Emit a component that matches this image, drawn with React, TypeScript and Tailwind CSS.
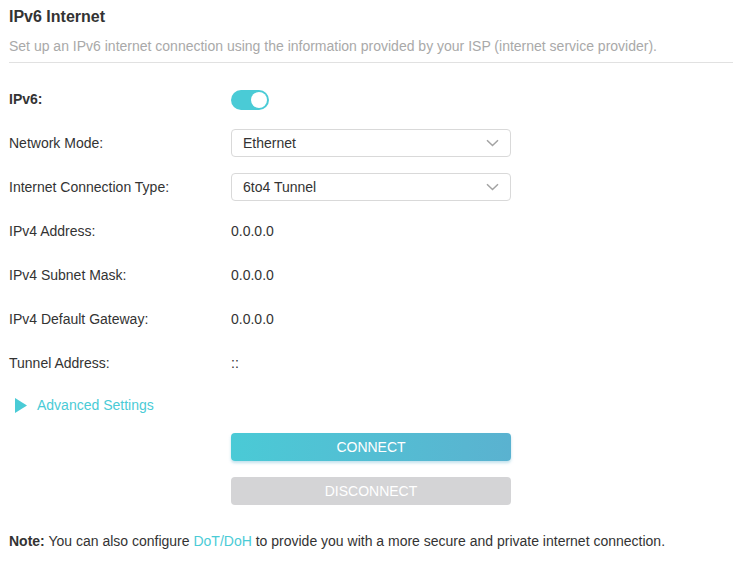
import React from "react";

function Chevron() {
  return (
    <svg width="13" height="8" viewBox="0 0 13 8" className="absolute right-[11px] top-1/2 -translate-y-1/2">
      <path d="M1 1.2 L6.5 6.5 L12 1.2" fill="none" stroke="#a3a3a3" strokeWidth="1.5" />
    </svg>
  );
}

function SelectBox({ value }: { value: string }) {
  return (
    <div className="relative flex h-[28px] w-[280px] items-center rounded-[4px] border border-[#d9d9d9] bg-white pl-[11px] text-[14px] text-[#333]">
      {value}
      <Chevron />
    </div>
  );
}

function Row({ label, children, bold }: { label: string; children: React.ReactNode; bold?: boolean }) {
  return (
    <div className="flex h-[44px] items-center">
      <div className={`w-[222px] text-[14px] text-[#333] ${bold ? "font-bold" : ""}`}>{label}</div>
      <div className="flex items-center text-[14px] text-[#333]">{children}</div>
    </div>
  );
}

export default function App() {
  return (
    <div className="min-h-[561px] w-[742px] bg-white px-[9px]" style={{ fontFamily: '"Liberation Sans", Arial, sans-serif' }}>
      <div className="flex h-[34px] items-center text-[16px] font-bold text-[#333]">IPv6 Internet</div>
      <div className="flex h-[24px] items-center text-[14px] text-[#a9a9a9]">
        Set up an IPv6 internet connection using the information provided by your ISP (internet service provider).
      </div>
      <div className="mt-[4px] h-[1px] w-[724px] bg-[#e1e1e1]" />
      <div className="mt-[14px]">
        <Row label="IPv6:" bold>
          <div className="relative mt-[1px] h-[20px] w-[38px] rounded-full bg-[#4acbd6]">
            <div className="absolute right-[2px] top-[2px] h-[16px] w-[16px] rounded-full bg-white" />
          </div>
        </Row>
        <Row label="Network Mode:">
          <SelectBox value="Ethernet" />
        </Row>
        <Row label="Internet Connection Type:">
          <SelectBox value="6to4 Tunnel" />
        </Row>
        <Row label="IPv4 Address:">0.0.0.0</Row>
        <Row label="IPv4 Subnet Mask:">0.0.0.0</Row>
        <Row label="IPv4 Default Gateway:">0.0.0.0</Row>
        <Row label="Tunnel Address:">::</Row>
      </div>
      <div className="flex h-[40px] items-center pl-[6px]">
        <svg width="12" height="15" viewBox="0 0 12 15">
          <path d="M0 0 L12 7.5 L0 15 Z" fill="#4acbd6" />
        </svg>
        <span className="ml-[10px] text-[14px] text-[#4acbd6]">Advanced Settings</span>
      </div>
      <div className="ml-[222px] mt-[8px] flex flex-col gap-[16px]">
        <button className="flex h-[28px] w-[280px] items-center justify-center rounded-[4px] bg-gradient-to-r from-[#4acad6] to-[#5ab2d0] text-[14px] text-white shadow-[0_2px_3px_rgba(80,170,200,0.35)]">
          CONNECT
        </button>
        <button className="flex h-[28px] w-[280px] items-center justify-center rounded-[4px] bg-[#d4d4d6] text-[14px] text-white">
          DISCONNECT
        </button>
      </div>
      <div className="mt-[20px] flex h-[32px] items-center text-[14px] text-[#333]">
        <span className="font-bold">Note:</span>
        <span className="whitespace-pre"> You can also configure </span>
        <span className="text-[#4acbd6]">DoT/DoH</span>
        <span className="whitespace-pre"> to provide you with a more secure and private internet connection.</span>
      </div>
    </div>
  );
}
